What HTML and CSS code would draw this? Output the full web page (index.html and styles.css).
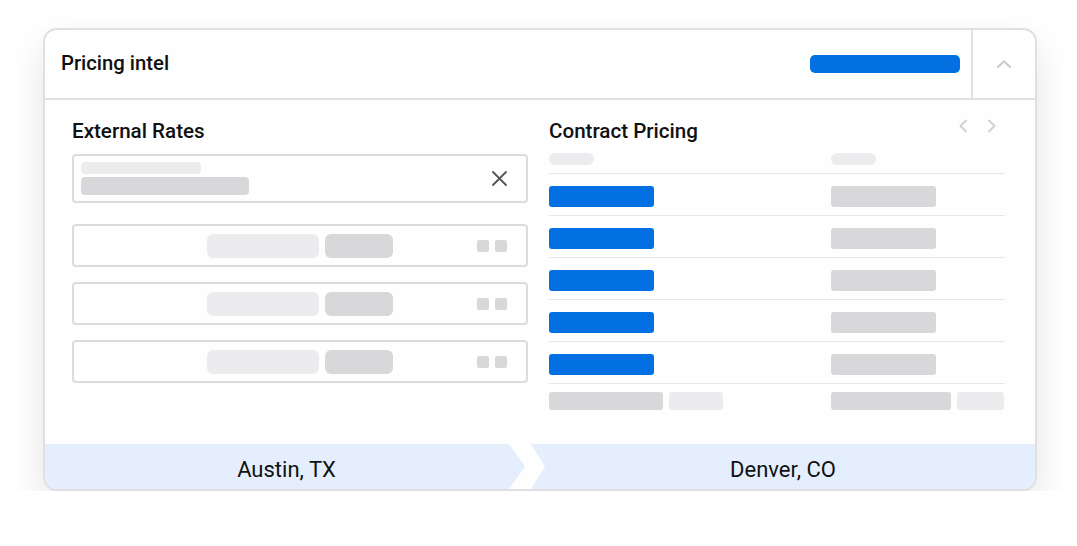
FILE: index.html
```html
<!DOCTYPE html>
<html lang="en">
<head>
  <meta charset="UTF-8">
  <meta name="viewport" content="width=device-width, initial-scale=1.0">
  <title>Pricing intel</title>
  <link rel="stylesheet" href="styles.css">
</head>
<body>
  <div class="card">
    <header class="card-head">
      <h1 class="card-title">Pricing intel</h1>
      <span class="head-bar"></span>
      <div class="collapse">
        <svg width="14" height="8" viewBox="0 0 14 8"><path d="M1 7 L7 1.2 L13 7" fill="none" stroke="#cacacc" stroke-width="2" stroke-linecap="round" stroke-linejoin="round"/></svg>
      </div>
    </header>

    <div class="card-body">
      <!-- left: external rates -->
      <section class="col">
        <h2 class="col-title">External Rates</h2>
        <div class="search">
          <div class="search-lines">
            <span class="sk sk-label"></span>
            <span class="sk sk-value"></span>
          </div>
          <svg class="clear" width="15" height="15" viewBox="0 0 15 15"><path d="M1 1 L14 14 M14 1 L1 14" stroke="#555" stroke-width="1.8" stroke-linecap="round"/></svg>
        </div>
        <div class="rate-row">
          <span class="sk pill-light"></span>
          <span class="sk pill-dark"></span>
          <span class="dots"><span class="sq"></span><span class="sq"></span></span>
        </div>
        <div class="rate-row">
          <span class="sk pill-light"></span>
          <span class="sk pill-dark"></span>
          <span class="dots"><span class="sq"></span><span class="sq"></span></span>
        </div>
        <div class="rate-row">
          <span class="sk pill-light"></span>
          <span class="sk pill-dark"></span>
          <span class="dots"><span class="sq"></span><span class="sq"></span></span>
        </div>
      </section>

      <!-- right: contract pricing -->
      <section class="col">
        <div class="col-head">
          <h2 class="col-title">Contract Pricing</h2>
          <div class="pager">
            <svg width="10" height="14" viewBox="0 0 10 14"><path d="M8 1.5 L2.5 7 L8 12.5" fill="none" stroke="#d2d2d4" stroke-width="2" stroke-linecap="round" stroke-linejoin="round"/></svg>
            <svg width="10" height="14" viewBox="0 0 10 14"><path d="M2 1.5 L7.5 7 L2 12.5" fill="none" stroke="#d2d2d4" stroke-width="2" stroke-linecap="round" stroke-linejoin="round"/></svg>
          </div>
        </div>
        <div class="table">
          <div class="trow thead"><span class="sk th"></span><span class="sk th"></span></div>
          <div class="trow"><span class="sk cell-blue"></span><span class="sk cell-gray"></span></div>
          <div class="trow"><span class="sk cell-blue"></span><span class="sk cell-gray"></span></div>
          <div class="trow"><span class="sk cell-blue"></span><span class="sk cell-gray"></span></div>
          <div class="trow"><span class="sk cell-blue"></span><span class="sk cell-gray"></span></div>
          <div class="trow"><span class="sk cell-blue"></span><span class="sk cell-gray"></span></div>
          <div class="trow tfoot">
            <span class="pair"><span class="sk tf-dark w114"></span><span class="sk tf-light w54"></span></span>
            <span class="pair"><span class="sk tf-dark w120"></span><span class="sk tf-light w47"></span></span>
          </div>
        </div>
      </section>
    </div>

    <footer class="route">
      <div class="stop stop-from">Austin, TX</div>
      <div class="stop stop-to">Denver, CO</div>
    </footer>
  </div>
</body>
</html>
```

FILE: styles.css
```css
body {
  margin: 0;
  padding: 0;
  background: #fff;
  color: #111;
  font-family: Roboto, "Liberation Sans", sans-serif;
}
.card {
  box-sizing: border-box;
  margin: 28px 0 0 43px;
  width: 994px;
  height: 463px;
  border: 2px solid #e0e0e2;
  border-radius: 14px;
  background: #fefeff;
  box-shadow: 0 16px 36px rgba(0, 0, 0, 0.11);
  display: flex;
  flex-direction: column;
  overflow: hidden;
}

/* header */
.card-head {
  box-sizing: border-box;
  height: 70px;
  display: flex;
  align-items: center;
  padding-left: 16px;
  border-bottom: 2px solid #e0e0e2;
}
.card-title {
  flex: 1;
  margin: 0 0 3px;
  font-size: 20.3px;
  font-weight: 500;
  color: #111;
}
.head-bar {
  width: 150px;
  height: 18px;
  border-radius: 5px;
  background: #026fe2;
  margin-right: 11px;
}
.collapse {
  align-self: stretch;
  width: 62px;
  border-left: 2px solid #e0e0e2;
  display: flex;
  align-items: center;
  justify-content: center;
}

/* body */
.card-body {
  flex: 1;
  display: flex;
  gap: 21px;
  padding: 21px 30px 0 27px;
}
.col {
  width: 456px;
}
.col-title {
  margin: 0;
  font-size: 20.6px;
  line-height: 20px;
  font-weight: 500;
  color: #111;
}
.sk {
  display: block;
  background: #d8d7da;
}

.search {
  box-sizing: border-box;
  margin-top: 13px;
  height: 49px;
  border: 2px solid #dcdcde;
  border-radius: 4px;
  padding: 6px 19px 6px 7px;
  display: flex;
  align-items: center;
  justify-content: space-between;
}
.search-lines {
  display: flex;
  flex-direction: column;
  gap: 3px;
}
.sk-label {
  width: 120px;
  height: 12px;
  border-radius: 4px;
  background: #ececef;
}
.sk-value {
  width: 168px;
  height: 18px;
  border-radius: 4px;
}

.rate-row {
  box-sizing: border-box;
  height: 43px;
  margin-top: 15px;
  border: 2px solid #dcdcde;
  border-radius: 4px;
  padding: 0 19px 0 133px;
  display: flex;
  align-items: center;
  gap: 6px;
}
.search + .rate-row {
  margin-top: 21px;
}
.pill-light {
  width: 112px;
  height: 24px;
  border-radius: 6px;
  background: #ececef;
}
.pill-dark {
  width: 68px;
  height: 24px;
  border-radius: 6px;
}
.dots {
  margin-left: auto;
  display: flex;
  gap: 6px;
}
.sq {
  width: 12px;
  height: 12px;
  border-radius: 2px;
  background: #d8d7da;
}

/* contract table */
.col-head {
  display: flex;
  justify-content: space-between;
  align-items: flex-start;
}
.pager {
  display: flex;
  gap: 19px;
  padding-right: 8px;
  margin-top: -2px;
}
.table {
  margin-top: 12px;
}
.trow {
  display: grid;
  grid-template-columns: 282px 1fr;
  padding: 12px 0 8px;
  border-bottom: 1px solid #e8e8ea;
}
.thead {
  padding: 0 0 8px;
}
.th {
  width: 45px;
  height: 12px;
  border-radius: 6px;
  background: #ececef;
}
.cell-blue {
  width: 105px;
  height: 21px;
  border-radius: 3px;
  background: #026fe2;
}
.cell-gray {
  width: 105px;
  height: 21px;
  border-radius: 3px;
}
.tfoot {
  border-bottom: none;
  padding-top: 8px;
}
.pair {
  display: flex;
  gap: 6px;
}
.tf-dark {
  height: 18px;
  border-radius: 3px;
}
.tf-light {
  height: 18px;
  border-radius: 3px;
  background: #ececef;
}
.w114 { width: 114px; }
.w54 { width: 54px; }
.w120 { width: 120px; }
.w47 { width: 47px; }

/* route footer */
.route {
  height: 45px;
  display: flex;
  gap: 6px;
}
.stop {
  box-sizing: border-box;
  display: flex;
  align-items: center;
  justify-content: center;
  padding-top: 5px;
  background: #e4eefd;
  font-size: 22px;
  color: #111;
}
.stop-from {
  width: 480px;
  padding-left: 3px;
  clip-path: polygon(0 0, calc(100% - 16px) 0, 100% 50%, calc(100% - 16px) 100%, 0 100%);
}
.stop-to {
  flex: 1;
  clip-path: polygon(0 0, 100% 0, 100% 100%, 0 100%, 14px 50%);
}
```
